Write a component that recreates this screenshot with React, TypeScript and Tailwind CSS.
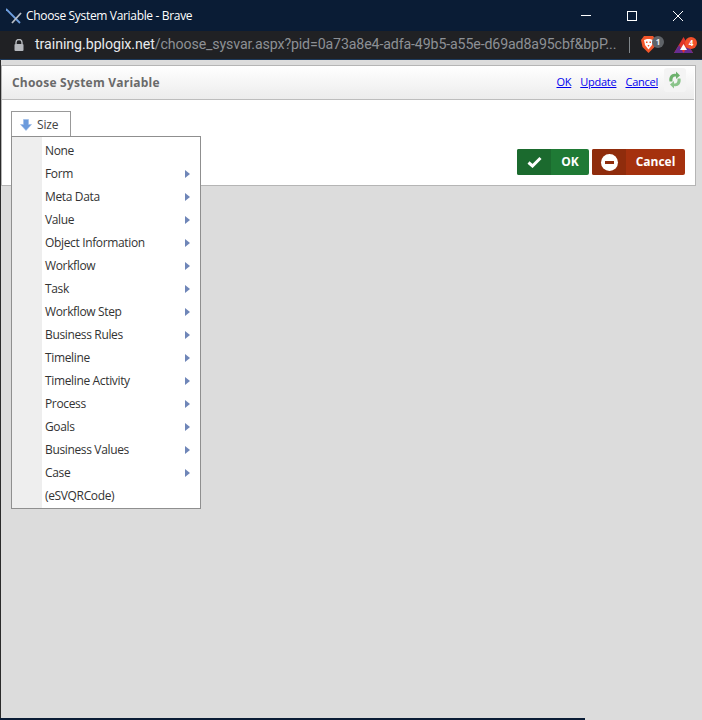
const menuItems = [
  { label: "None", sub: false },
  { label: "Form", sub: true },
  { label: "Meta Data", sub: true },
  { label: "Value", sub: true },
  { label: "Object Information", sub: true },
  { label: "Workflow", sub: true },
  { label: "Task", sub: true },
  { label: "Workflow Step", sub: true },
  { label: "Business Rules", sub: true },
  { label: "Timeline", sub: true },
  { label: "Timeline Activity", sub: true },
  { label: "Process", sub: true },
  { label: "Goals", sub: true },
  { label: "Business Values", sub: true },
  { label: "Case", sub: true },
  { label: "(eSVQRCode)", sub: false },
];

function AppLogo() {
  return (
    <svg width="16" height="16" viewBox="0 0 16 16" className="shrink-0">
      <path d="M0 1 L14 15" stroke="#6f9fe0" strokeWidth="1.8" />
      <path d="M15 5 L6 15" stroke="#b9bec6" strokeWidth="1.8" />
    </svg>
  );
}

function BraveIcon() {
  return (
    <div className="relative w-[24px] h-[20px]">
      <svg width="15" height="17" viewBox="0 0 15 17" className="mt-[2px]">
        <path d="M3 0 H12 L15 4 L13.5 11 L7.5 17 L1.5 11 L0 4 Z" fill="#f1562b" />
        <path d="M3 4 L6 3 H9 L12 4 L11 9 L7.5 13.5 L4 9 Z" fill="#ffffff" />
        <path d="M5 5.5 H6.5 V7 H5 Z M8.5 5.5 H10 V7 H8.5 Z M6.5 9 H8.5 L7.5 11 Z" fill="#f1562b" />
      </svg>
      <div className="absolute left-[11px] top-0 w-[12px] h-[12px] rounded-full bg-[#5f6368] text-[#e8eaed] text-[8px] leading-[12px] text-center font-bold">
        1
      </div>
    </div>
  );
}

function BatIcon() {
  return (
    <div className="relative w-[24px] h-[20px]">
      <svg width="19" height="16" viewBox="0 0 19 16" className="mt-[3px]">
        <path d="M9.5 0 L19 16 H0 Z" fill="#e0352b" />
        <path d="M0 16 L5 8 L9.5 16 Z" fill="#662d91" />
        <path d="M19 16 L14 8 L9.5 16 Z" fill="#662d91" />
        <path d="M9.5 7 L13 13 H6 Z" fill="#ffffff" />
      </svg>
      <div className="absolute left-[11px] top-0 w-[12px] h-[12px] rounded-full bg-[#f4502a] text-white text-[8px] leading-[12px] text-center font-bold">
        4
      </div>
    </div>
  );
}

function RefreshIcon() {
  return (
    <div className="w-[22px] h-[24px] flex items-center justify-center rounded-[3px] bg-[#f4f4f4]">
      <svg width="16" height="18" viewBox="0 0 16 18">
        <path d="M2.5 10.5 C1.5 5 5 2 9 3 L9 0.5 L13 4.5 L9 8 L9 5.5 C6.5 5 5 7 5.5 10.5 Z" fill="#6db26d" />
        <path d="M13.5 7.5 C14.5 13 11 16 7 15 L7 17.5 L3 13.5 L7 10 L7 12.5 C9.5 13 11 11 10.5 7.5 Z" fill="#8ac48a" />
      </svg>
    </div>
  );
}

export default function App() {
  return (
    <div className="w-[702px] h-[720px] flex flex-col overflow-hidden bg-[#dcdcdc] font-['Open_Sans',sans-serif]">
      {/* window title */}
      <div className="h-[31px] bg-[#0a1c35] flex items-center pl-[6px] shrink-0">
        <AppLogo />
        <span className="ml-[4px] text-[12px] tracking-[-0.33px] text-white">Choose System Variable - Brave</span>
        <div className="ml-auto flex items-center h-full pr-[1px]">
          <div className="w-[46px] flex justify-center">
            <div className="w-[10px] h-px bg-white" />
          </div>
          <div className="w-[46px] flex justify-center">
            <div className="w-[10px] h-[10px] border border-white" />
          </div>
          <div className="w-[46px] flex justify-center">
            <svg width="10" height="10" viewBox="0 0 10 10">
              <path d="M0 0 L10 10 M10 0 L0 10" stroke="#fff" strokeWidth="1" />
            </svg>
          </div>
        </div>
      </div>

      {/* address bar */}
      <div className="h-[29px] bg-[#202124] border-b border-[#1d3a5c] flex items-center shrink-0">
        <svg width="10" height="12" viewBox="0 0 10 12" className="ml-[14px] shrink-0">
          <path d="M2 5 V3.5 a3 3 0 0 1 6 0 V5" fill="none" stroke="#b5b8bd" strokeWidth="1.4" />
          <rect x="0.5" y="5" width="9" height="7" rx="1" fill="#b5b8bd" />
        </svg>
        <div className="ml-[11px] w-[581px] whitespace-nowrap text-[14.2px] tracking-[-0.13px] font-['Roboto',sans-serif] text-[#8d9095]">
          <span className="text-[#e8eaed] tracking-[-0.05px]">training.bplogix.net</span>
          /choose_sysvar.aspx?pid=0a73a8e4-adfa-49b5-a55e-d69ad8a95cbf&bpP...
        </div>
        <div className="ml-[13px] w-px h-[16px] bg-[#80868b]" />
        <div className="ml-[11px]">
          <BraveIcon />
        </div>
        <div className="ml-[9px]">
          <BatIcon />
        </div>
      </div>

      {/* page */}
      <div className="flex-1 border-l border-[#2a2a2a] pt-[5px] pr-[6px]">
        <div className="border border-[#b5b5b5] bg-white">
          <div className="h-[34px] mr-px flex items-center border-b border-[#bdbdbd] bg-gradient-to-b from-white to-[#ececec] pl-[10px] pr-[8px]">
            <span className="text-[12px] tracking-[0.22px] font-bold text-[#6a6a6a]">Choose System Variable</span>
            <div className="ml-auto flex items-center gap-[9px] text-[11px] tracking-[-0.25px] text-[#0000ee] underline">
              <span>OK</span>
              <span>Update</span>
              <span>Cancel</span>
            </div>
            <div className="ml-[6px] -mt-[5px]">
              <RefreshIcon />
            </div>
          </div>

          <div className="h-[85px] relative pl-[9px] pt-[11px]">
            <div className="relative w-[60px]">
              <div className="h-[26px] border border-b-0 border-[#999999] flex items-center pl-[8px] gap-[5px] text-[12px] tracking-[-0.2px] text-[#444444]">
                <div className="w-[12px] h-[12px] flex items-center justify-center">
                  <svg width="12" height="12" viewBox="0 0 12 12">
                    <path d="M3.5 0.5 H8.5 V5.5 H11.5 L6 11.5 L0.5 5.5 H3.5 Z" fill="#6c9bdc" stroke="#9bbbe8" strokeWidth="0.6" />
                  </svg>
                </div>
                <span>Size</span>
              </div>
              {/* dropdown menu */}
              <div className="absolute left-0 top-[25px] w-[190px] h-[373px] z-10 border border-[#8f8f8f] bg-white pt-[2px]">
                <div className="absolute left-0 top-0 bottom-0 w-[30px] bg-[#eeeeee]" />
                {menuItems.map((item) => (
                  <div key={item.label} className="relative h-[23px] pl-[33px] pr-[10px] flex items-center justify-between text-[12px] tracking-[-0.35px] text-[#333333]">
                    <span>{item.label}</span>
                    {item.sub && (
                      <svg width="5" height="8" viewBox="0 0 5 8">
                        <path d="M0 0 L5 4 L0 8 Z" fill="#6f86b8" />
                      </svg>
                    )}
                  </div>
                ))}
              </div>
            </div>

            <div className="absolute right-[10px] top-[49px] flex gap-[3px] text-[12px] font-bold text-white">
              <div className="h-[26px] w-[72px] flex rounded-[2px] overflow-hidden bg-[#1f7a35]">
                <div className="w-[34px] bg-[#1b6a2e] flex items-center justify-center">
                  <svg width="15" height="12" viewBox="0 0 15 12">
                    <path d="M1.5 6.5 L5.5 10 L13.5 2" fill="none" stroke="#fff" strokeWidth="3" />
                  </svg>
                </div>
                <div className="flex-1 flex items-center justify-center">OK</div>
              </div>
              <div className="h-[26px] w-[93px] flex rounded-[2px] overflow-hidden bg-[#a5310e]">
                <div className="w-[34px] bg-[#8f2c0c] flex items-center justify-center">
                  <div className="w-[17px] h-[17px] rounded-full bg-white flex items-center justify-center">
                    <div className="w-[9px] h-[3px] bg-[#8f2c0c]" />
                  </div>
                </div>
                <div className="flex-1 flex items-center justify-center">Cancel</div>
              </div>
            </div>
          </div>
        </div>
      </div>

      <div className="h-[2px] w-[585px] bg-[#0a1c35] shrink-0" />
    </div>
  );
}
